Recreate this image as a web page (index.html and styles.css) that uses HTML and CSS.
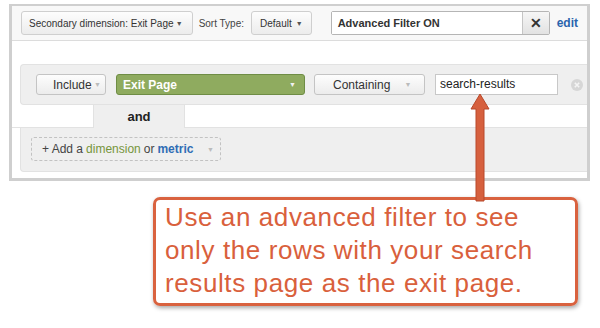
FILE: index.html
```html
<!DOCTYPE html>
<html lang="en">
<head>
  <meta charset="UTF-8" />
  <title>Advanced Filter</title>
  <link rel="stylesheet" href="styles.css">
</head>
<body>

  <div class="panel">
    <div class="topbar">
      <div class="btn btn-dim">Secondary dimension: Exit Page <span class="caret">▼</span></div>
      <span class="label">Sort Type:</span>
      <div class="btn btn-sort">Default <span class="caret">▼</span></div>
      <div class="filter-on">
        <div class="filter-text">Advanced Filter ON</div>
        <div class="filter-x">✕</div>
      </div>
      <a class="edit">edit</a>
    </div>

    <div class="filter-body">
      <div class="filter-row">
        <div class="btn btn-include">Include <span class="caret light">▼</span></div>
        <div class="btn btn-green">Exit Page <span class="caret white">▼</span></div>
        <div class="btn btn-match">Containing <span class="caret light">▼</span></div>
        <div class="value">search-results</div>
        <svg class="remove" width="12" height="12" viewBox="0 0 12 12">
          <circle cx="6" cy="6" r="6" fill="#d6d6d6"/>
          <path d="M3.8 3.8 L8.2 8.2 M8.2 3.8 L3.8 8.2" stroke="#f4f4f4" stroke-width="1.6"/>
        </svg>
      </div>
      <div class="and-row">
        <div class="and-side"></div>
        <div class="and-label">and</div>
        <div class="and-side wide"></div>
      </div>
      <div class="add-row">
        <div class="add-box">+ Add a <span class="dim">dimension</span> or <span class="met">metric</span> <span class="caret light">▼</span></div>
      </div>
    </div>
  </div>

  <div class="callout">
    Use an advanced filter to see<br>
    only the rows with your search<br>
    results page as the exit page.
  </div>

  <svg class="arrow" width="30" height="112" viewBox="0 0 30 112">
    <path d="M15 2 L24 17 L19 17 L19 109 L11 109 L11 17 L6 17 Z" fill="#d6603e" stroke="#b8492b" stroke-width="1" stroke-linejoin="round"/>
  </svg>

</body>
</html>
```

FILE: styles.css
```css
body {
  margin: 0;
  background: white;
  font-family: "Liberation Sans", Arial, sans-serif;
  color: #333;
  position: relative;
  width: 600px;
  height: 328px;
  overflow: hidden;
}

.panel {
  margin: 4px 0 0 9px;
  width: 575px;
  border: 3px solid #cfcfcf;
  border-top-width: 2px;
  background: white;
  padding-bottom: 6px;
}

.topbar {
  display: flex;
  align-items: center;
  height: 34px;
  padding: 0 9px;
  background: #f8f8f8;
  border-bottom: 1px solid #dcdcdc;
}

.btn {
  display: flex;
  align-items: center;
  box-sizing: border-box;
  height: 24px;
  font-size: 10px;
  border: 1px solid #cfcfcf;
  border-radius: 3px;
  background: linear-gradient(#fdfdfd, #ececec);
  white-space: nowrap;
}

.caret {
  font-size: 7px;
  color: #555;
  margin-left: auto;
}

.caret.light {
  color: #bbb;
}

.caret.white {
  color: #f2f2f2;
}

.btn-dim {
  width: 173px;
  padding: 0 9px 0 7px;
}

.label {
  font-size: 10px;
  color: #444;
  margin: 0 7px 0 6px;
  white-space: nowrap;
}

.btn-sort {
  width: 61px;
  padding: 0 8px 0 8px;
}

.filter-on {
  display: flex;
  height: 22px;
  margin-left: 19px;
  border: 1px solid #b5b5b5;
  border-radius: 2px;
}

.filter-text {
  width: 184px;
  padding-left: 6px;
  font-size: 11px;
  font-weight: bold;
  line-height: 22px;
  background: white;
}

.filter-x {
  width: 26px;
  border-left: 1px solid #c5c5c5;
  background: linear-gradient(#f6f6f6, #e2e2e2);
  text-align: center;
  font-size: 14px;
  font-weight: bold;
  line-height: 22px;
  color: #333;
}

.edit {
  margin-left: 7px;
  font-size: 12px;
  font-weight: bold;
  color: #2a64ad;
}

.filter-body {
  padding-top: 23px;
}

.filter-row {
  display: flex;
  align-items: center;
  height: 41px;
  margin-left: 8px;
  padding-left: 15px;
  background: #efefef;
  border: 1px solid #e2e2e2;
  border-right: none;
  border-radius: 4px 0 0 4px;
  box-sizing: border-box;
}

.filter-row .btn {
  height: 21px;
  font-size: 12px;
  border-color: #c4c4c4;
}

.btn-include {
  width: 70px;
  padding: 0 4px 0 16px;
  margin-right: 10px;
}

.btn-green {
  width: 189px;
  padding: 0 8px 0 6px;
  margin-right: 9px;
  background: #8fab5f;
  border-color: #6f8d45 !important;
  color: white;
  font-weight: bold;
}

.btn-match {
  width: 111px;
  padding: 0 8px 0 18px;
  margin-right: 10px;
}

.btn-match .caret {
  margin-left: 14px;
}

.value {
  box-sizing: border-box;
  width: 123px;
  height: 21px;
  padding-left: 4px;
  border: 1px solid #c8c8c8;
  background: white;
  font-size: 12px;
  line-height: 19px;
  color: #222;
}

.remove {
  margin-left: 13px;
}

.and-row {
  display: flex;
  height: 23px;
}

.and-side {
  width: 81px;
  background: white;
  border-bottom: 1px solid #e2e2e2;
  border-right: 1px solid #e2e2e2;
}

.and-side.wide {
  flex: 1;
  border-right: none;
  border-left: 1px solid #e2e2e2;
}

.and-label {
  width: 90px;
  background: #efefef;
  text-align: center;
  font-size: 13px;
  font-weight: bold;
  line-height: 23px;
  color: #222;
}

.add-row {
  height: 44px;
  margin-left: 8px;
  padding: 9px 0 0 10px;
  box-sizing: border-box;
  background: #efefef;
  border: 1px solid #e2e2e2;
  border-top: none;
  border-right: none;
  border-radius: 0 0 0 4px;
}

.add-box {
  display: flex;
  align-items: center;
  box-sizing: border-box;
  width: 190px;
  height: 24px;
  padding: 0 6px 0 10px;
  border: 1px dashed #c2c2c2;
  border-radius: 3px;
  font-size: 12px;
  color: #444;
}

.add-box .dim {
  color: #76953c;
  margin: 0 3px;
}

.add-box .met {
  color: #2f6db5;
  font-weight: bold;
  margin-left: 3px;
}

.callout {
  box-sizing: border-box;
  width: 425px;
  height: 109px;
  margin: 16px 0 0 153px;
  padding: 1px 0 0 9px;
  border: 3px solid #d9623f;
  border-radius: 7px;
  box-shadow: 1px 2px 4px rgba(0, 0, 0, 0.35);
  font-size: 26px;
  letter-spacing: 0.6px;
  line-height: 33px;
  color: #d9603c;
}

.arrow {
  position: absolute;
  left: 465px;
  top: 92px;
}
```
